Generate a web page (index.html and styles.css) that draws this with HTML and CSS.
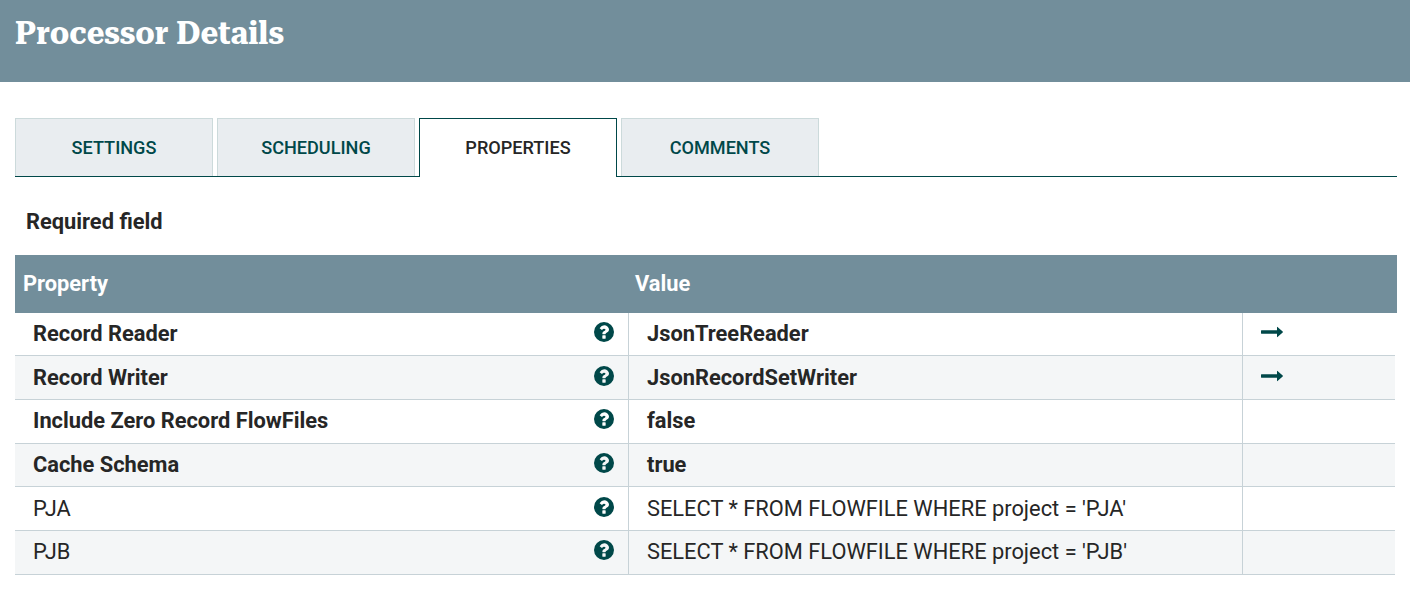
FILE: index.html
```html
<!DOCTYPE html>
<html lang="en">
<head>
<meta charset="utf-8">
<title>Processor Details</title>
<link rel="stylesheet" href="styles.css">
</head>
<body>
<svg class="defs" width="0" height="0">
  <symbol id="help" viewBox="0 0 1536 1536"><path fill-rule="evenodd" d="M768 0a768 768 0 1 0 0 1536a768 768 0 1 0 0-1536zM896 1248q0 32-32 32h-192q-32 0-32-32v-192q0-32 32-32h192q32 0 32 32zM1152 576q0 118-94 192q-30 26-92 58q-70 40-70 76q0 34-32 34h-192q-32 0-32-34q0-122 108-190q94-52 118-82q20-26 8-68q-22-50-104-50q-78 0-138 78q-22 26-48 8l-130-98q-26-20-8-48q126-196 338-196q140 0 248 88q120 96 120 232z"/></symbol>
  <symbol id="arrow" viewBox="0 0 22 12"><path d="M.4 4.300H16V1.200q0-.7.500-.3l5.200 4.700q.4.400 0 .8l-5.200 4.700q-.5.400-.5-.3V7.700H.4Q0 7.700 0 7.300V4.700Q0 4.300.4 4.300z"/></symbol>
</svg>
<header class="dialog-header"><h1>Processor Details</h1></header>
<main class="content">
  <nav class="tabs">
    <div class="tab">SETTINGS</div>
    <div class="tab">SCHEDULING</div>
    <div class="tab selected">PROPERTIES</div>
    <div class="tab">COMMENTS</div>
  </nav>
  <div class="required-label">Required field</div>
  <section class="table">
    <div class="row head"><div class="cell"><span>Property</span></div><div class="cell"><span>Value</span></div></div>
    <div class="row required"><div class="cell"><span>Record Reader</span><svg class="help"><use href="#help"/></svg></div><div class="cell"><span>JsonTreeReader</span></div><div class="cell"><svg class="arrow"><use href="#arrow"/></svg></div></div>
    <div class="row required"><div class="cell"><span>Record Writer</span><svg class="help"><use href="#help"/></svg></div><div class="cell"><span>JsonRecordSetWriter</span></div><div class="cell"><svg class="arrow"><use href="#arrow"/></svg></div></div>
    <div class="row required"><div class="cell"><span>Include Zero Record FlowFiles</span><svg class="help"><use href="#help"/></svg></div><div class="cell"><span>false</span></div><div class="cell"></div></div>
    <div class="row required"><div class="cell"><span>Cache Schema</span><svg class="help"><use href="#help"/></svg></div><div class="cell"><span>true</span></div><div class="cell"></div></div>
    <div class="row"><div class="cell"><span>PJA</span><svg class="help"><use href="#help"/></svg></div><div class="cell"><span>SELECT * FROM FLOWFILE WHERE project = 'PJA'</span></div><div class="cell"></div></div>
    <div class="row"><div class="cell"><span>PJB</span><svg class="help"><use href="#help"/></svg></div><div class="cell"><span>SELECT * FROM FLOWFILE WHERE project = 'PJB'</span></div><div class="cell"></div></div>
  </section>
</main>
</body>
</html>
```
FILE: styles.css
```css
* { box-sizing: border-box; }
body { margin: 0; background: #fff; color: #262626; font-family: Roboto, sans-serif; font-size: 21.83px; }
.defs { display: block; }
.dialog-header { height: 82px; padding: 12px 15px; background: #728e9b; }
h1 { width: max-content; margin: 0; color: #fff; font: 700 32px/42px "Roboto Slab", "Roboto Serif", "DejaVu Serif", serif; white-space: nowrap; transform-origin: left; transform: scaleX(.943); }
.content { padding: 36px 13px 0 15px; }
.tabs { display: flex; gap: 4px; height: 59px; border-bottom: 1px solid #004849; }
.tab { width: 198px; height: 58px; border: 1px solid #ccdadb; border-bottom: 0; background: #e9edf0; color: #004849; font-size: 18.1px; font-weight: 500; line-height: 57px; text-align: center; }
.tab.selected { height: 59px; background: #fff; color: #262626; border-color: #004849; }
.required-label { height: 78px; padding: 31px 11px 0; font-weight: 700; line-height: 28px; }
.row { display: grid; grid-template-columns: 614px 614px 152px; width: 1380px; height: 43.67px; border-bottom: 1px solid #c7d2d7; }
.row:nth-child(odd) { background: #f4f6f7; }
.row.head { grid-template-columns: 612px 1fr; width: 1382px; height: 57.6px; border: 0; background: #728e9b; color: #fff; font-weight: 700; }
.row.required { font-weight: 700; }
.cell { display: flex; align-items: center; justify-content: space-between; padding: 0 14px 0 18px; border-right: 1px solid #c7d2d7; line-height: 26px; }
.cell span { margin-bottom: .04px; }
.cell:last-child { border-right: 0; }
.head .cell { padding: 0 8px; border: 0; }
.help { width: 20px; height: 20px; margin-top: -3.5px; fill: #004849; }
.arrow { width: 22px; height: 12px; margin-top: -3.2px; fill: #004849; }
```
